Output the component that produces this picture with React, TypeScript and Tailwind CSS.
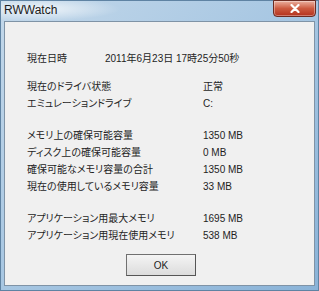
import React from 'react';

const rows: { label: string; value: string }[][] = [
  [
    { label: '現在のドライバ状態', value: '正常' },
    { label: 'エミュレーションドライブ', value: 'C:' },
  ],
  [
    { label: 'メモリ上の確保可能容量', value: '1350 MB' },
    { label: 'ディスク上の確保可能容量', value: '0 MB' },
    { label: '確保可能なメモリ容量の合計', value: '1350 MB' },
    { label: '現在の使用しているメモリ容量', value: '33 MB' },
  ],
  [
    { label: 'アプリケーション用最大メモリ', value: '1695 MB' },
    { label: 'アプリケーション用現在使用メモリ', value: '538 MB' },
  ],
];

const App: React.FC = () => {
  return (
    <div
      className="w-[319px] h-[291px] flex flex-col border border-[#5f83a3] bg-gradient-to-br from-[#c3d8ea] via-[#a6c6e2] to-[#8ab3d8] text-[#1e1e1e]"
      style={{ fontFamily: '"Liberation Sans", "Noto Sans CJK JP", sans-serif' }}
    >
      {/* Title bar */}
      <div className="relative h-[20px] flex items-start">
        <div className="absolute left-0 top-0 w-[120px] h-[20px] bg-[radial-gradient(ellipse_at_30%_40%,rgba(255,255,255,0.75),rgba(255,255,255,0)_70%)]" />
        <span className="relative pl-[3px] pt-[2px] text-[12px] leading-[14px] text-[#1b1b1b]">RWWatch</span>
        <div className="absolute right-[2px] top-[-1px] w-[43px] h-[17px] rounded-b-[4px] border border-[#6b2b22] bg-gradient-to-b from-[#eab0a0] via-[#cc5a40] to-[#b3301c] flex items-center justify-center shadow-[inset_0_0_0_1px_rgba(255,255,255,0.35)]">
          <svg width="10" height="9" viewBox="0 0 10 9">
            <path d="M1.5 1 L8.5 8 M8.5 1 L1.5 8" stroke="#fff" strokeWidth="2.2" strokeLinecap="round" />
          </svg>
        </div>
      </div>

      {/* Client area */}
      <div className="flex-1 mx-[3px] mb-[4px] border border-[#7f93a6] bg-[#f0f0f0] pt-[28px] pl-[22px] text-[10px] leading-[17px] [font-feature-settings:'palt']">
        <div className="flex">
          <span className="w-[78px]">現在日時</span>
          <span>2011年6月23日 17時25分50秒</span>
        </div>
        <div className="mt-[11px] flex flex-col gap-[15px]">
          {rows.map((group, gi) => (
            <div key={gi} className="flex flex-col">
              {group.map((r) => (
                <div key={r.label} className="flex">
                  <span className="w-[176px]">{r.label}</span>
                  <span>{r.value}</span>
                </div>
              ))}
            </div>
          ))}
        </div>
        <div className="mt-[10px] ml-[99px] w-[70px] h-[22px] border border-[#707070] border-r-[#555] border-b-[#555] bg-gradient-to-b from-[#f4f4f4] to-[#dcdcdc] flex items-center justify-center text-[10px]">
          OK
        </div>
      </div>
    </div>
  );
};

export default App;
